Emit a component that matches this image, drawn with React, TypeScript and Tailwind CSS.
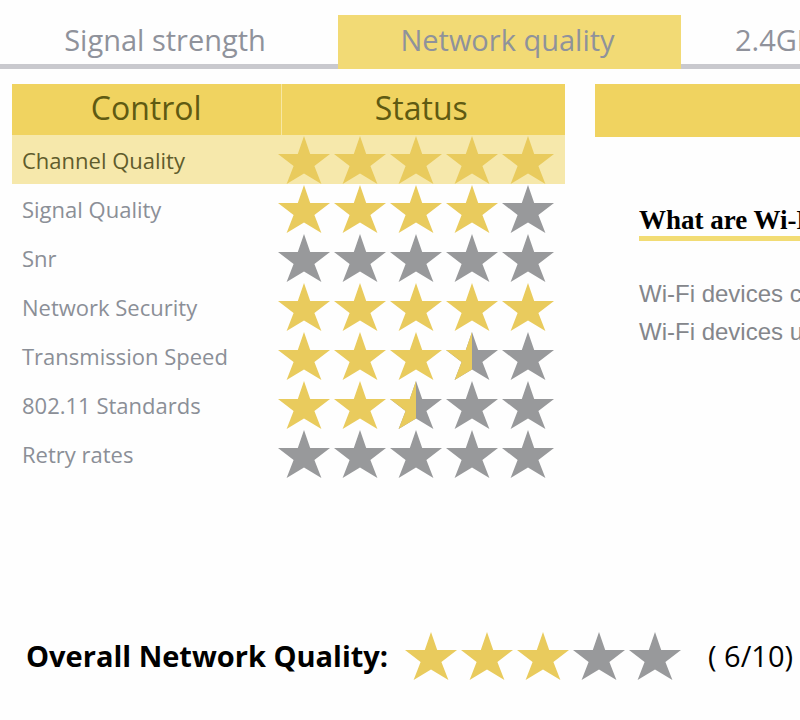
const STAR = "26,0 32.2,18 52,18 36.4,30 43.4,48 26,37.5 8.6,48 15.6,30 0,18 19.8,18";
const LEFT_HALF = "26,0 26,37.5 8.6,48 15.6,30 0,18 19.8,18";

function Star({ fill }: { fill: number }) {
  return (
    <svg viewBox="0 0 52 48" className="h-12 w-[52px] shrink-0" aria-hidden="true">
      <polygon points={STAR} fill={fill === 1 ? "#e9cb5d" : "#98999b"} />
      {fill === 0.5 && <polygon points={LEFT_HALF} fill="#e9cb5d" />}
    </svg>
  );
}

function Rating({ value }: { value: number }) {
  return (
    <div className="flex gap-1" role="img" aria-label={`${value} of 5 stars`}>
      {[0, 1, 2, 3, 4].map((i) => (
        <Star key={i} fill={Math.max(0, Math.min(1, value - i))} />
      ))}
    </div>
  );
}

const rows = [
  { name: "Channel Quality", value: 5, selected: true },
  { name: "Signal Quality", value: 4 },
  { name: "Snr", value: 0 },
  { name: "Network Security", value: 5 },
  { name: "Transmission Speed", value: 3.5 },
  { name: "802.11 Standards", value: 2.5 },
  { name: "Retry rates", value: 0 },
];

const tab =
  "h-[54px] shrink-0 whitespace-nowrap border-b-[5px] text-[29px] leading-[49px] text-[#8f929b]";

export default function App() {
  return (
    <div className="min-h-screen overflow-hidden bg-[#fefefe] pt-[15px] font-['Open_Sans','Noto_Sans',sans-serif]">
      <nav className="flex">
        <button className={`${tab} w-[338px] border-[#c9c9ce] pr-2`}>Signal strength</button>
        <button className={`${tab} w-[343px] border-[#f2da75] bg-[#f2da75] pr-1`}>Network quality</button>
        <button className={`${tab} grow border-[#c9c9ce] pl-[54px] text-left`}>2.4GHz</button>
      </nav>

      <main className="flex gap-[30px] pl-3 pt-[15px]">
        <table className="w-[553px] shrink-0 table-fixed border-collapse self-start">
          <thead>
            <tr className="h-[51px] bg-[#f0d360] text-[32px] leading-[48px] text-[#5f5a12]">
              <th className="w-[269px] border-r border-[#f7e7a3] p-0 pb-[3px] font-normal">Control</th>
              <th className="p-0 pb-[3px] pr-1 font-normal">Status</th>
            </tr>
          </thead>
          <tbody>
            {rows.map((row) => (
              <tr
                key={row.name}
                className={
                  row.selected ? "h-[49px] bg-[#f6e8ab] text-[#5f5c2c]" : "h-[49px] text-[#8b8f97]"
                }
              >
                <th scope="row" className="p-0 pl-[10px] text-left text-[22px] font-normal leading-[48px]">
                  {row.name}
                </th>
                <td className="p-0">
                  <div className="-ml-[3px]">
                    <Rating value={row.value} />
                  </div>
                </td>
              </tr>
            ))}
          </tbody>
        </table>

        <section className="min-w-0 grow">
          <div className="h-[53px] bg-[#f0d360]" />
          <div className="whitespace-nowrap pl-11 pt-[67px]">
            <h2 className="w-max border-b-[5px] border-[#f2dc74] font-['Liberation_Serif',serif] text-[27px] font-bold leading-8 text-black">
              What are Wi-Fi
            </h2>
            <div className="pt-[34px] font-['Liberation_Sans',sans-serif] text-[24px] leading-[38px] text-[#84868b]">
              <p>Wi-Fi devices can</p>
              <p>Wi-Fi devices use</p>
            </div>
          </div>
        </section>
      </main>

      <footer className="flex items-center whitespace-nowrap pb-8 pl-[26px] pt-[154px] text-[29px] leading-[48px] text-black">
        <h2 className="w-[379px] shrink-0 font-bold">Overall Network Quality:</h2>
        <Rating value={3} />
        <span className="pl-[27px]">( 6/10)</span>
      </footer>
    </div>
  );
}
